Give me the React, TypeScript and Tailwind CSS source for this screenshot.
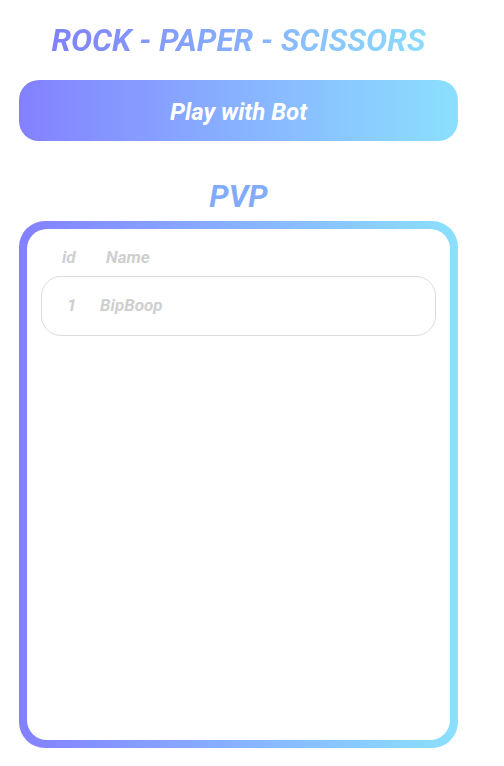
import React from 'react';

const players = [{ id: 1, name: 'BipBoop' }];

export default function App() {
  return (
    <div
      className="min-h-[766px] bg-white"
      style={{ fontFamily: 'Roboto, "Liberation Sans", sans-serif' }}
    >
      <div className="ml-[19px] flex w-[439px] flex-col items-center pt-[22px]">
        {/* Title */}
        <h1 className="bg-gradient-to-r from-[#8080fb] to-[#8cdcfd] bg-clip-text text-[31.5px] font-bold italic leading-[38px] text-transparent">
          ROCK - PAPER - SCISSORS
        </h1>

        {/* Bot button */}
        <button className="mt-[20px] h-[61px] w-full rounded-[20px] bg-gradient-to-r from-[#8380ff] to-[#8be0fd] pt-[3px] text-[24px] font-bold italic text-white">
          Play with Bot
        </button>

        {/* PVP */}
        <h2 className="mt-[38px] text-[31px] font-bold italic leading-[36px] text-[#82acf9]">PVP</h2>

        <div className="mt-[6px] h-[527px] w-full rounded-[26px] bg-gradient-to-r from-[#8380ff] to-[#8be0fd] p-[8px]">
          <div className="h-full rounded-[20px] bg-white px-[14px] pt-[16px]">
            <div className="flex text-[17px] font-bold italic text-[#cfcfcf]">
              <span className="ml-[21px] w-[44px]">id</span>
              <span>Name</span>
            </div>
            <div className="mt-[5px] flex flex-col gap-2">
              {players.map((p) => (
                <div
                  key={p.id}
                  className="flex h-[60px] items-center rounded-[20px] border border-[#dcdcdc] text-[17px] font-bold italic text-[#cfcfcf]"
                >
                  <span className="ml-[25px] w-[33px]">{p.id}</span>
                  <span>{p.name}</span>
                </div>
              ))}
            </div>
          </div>
        </div>
      </div>
    </div>
  );
}
